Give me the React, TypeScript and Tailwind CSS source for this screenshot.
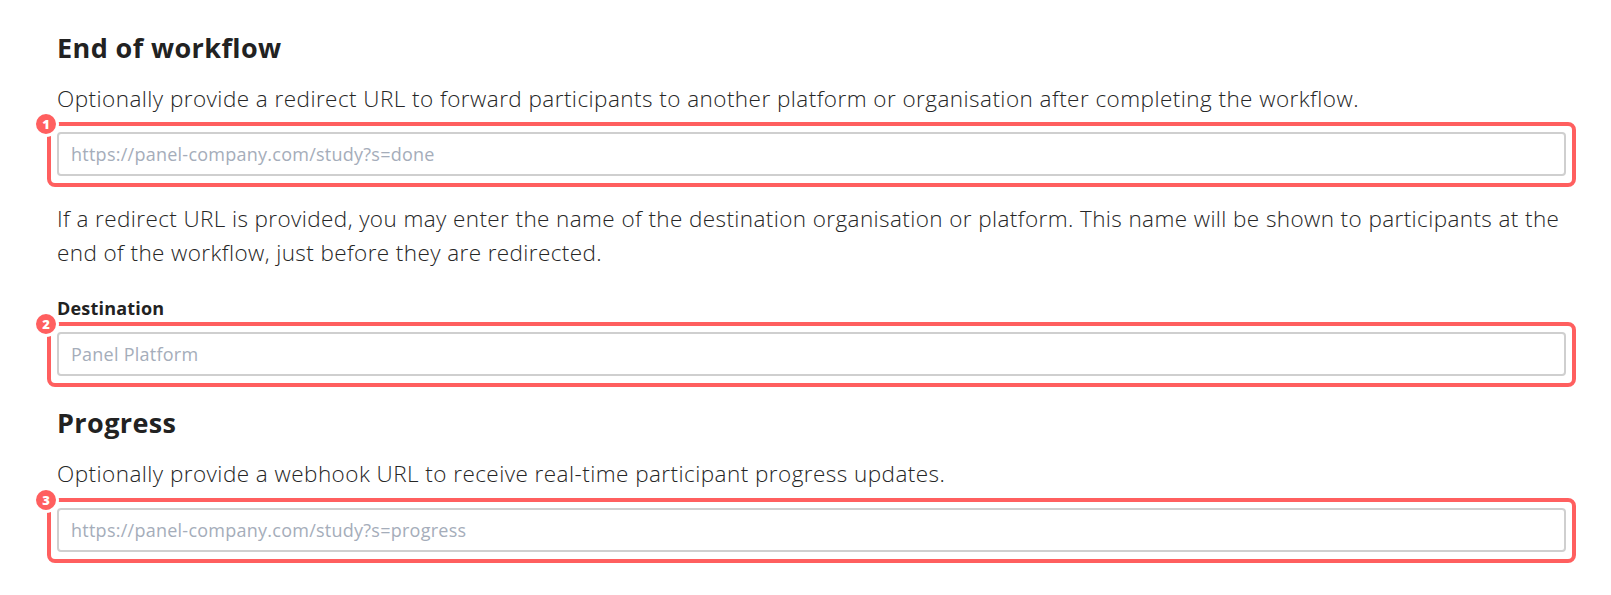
import React from "react";

function Badge({ n }: { n: number }) {
  return (
    <div className="absolute left-[-24px] top-[-21px] flex h-[26px] w-[26px] items-center justify-center rounded-full border-[3px] border-white bg-[#ff5f5f] text-[13px] font-extrabold leading-none text-white">
      {n}
    </div>
  );
}

function Field({ placeholder, n }: { placeholder: string; n: number }) {
  return (
    <div className="relative">
      <input
        className="block h-[44px] w-full rounded-[4px] border-2 border-[#cfcfcf] bg-white px-[12px] text-[18px] tracking-[0.25px] text-[#333] outline-none placeholder:text-[#a5adba]"
        placeholder={placeholder}
        readOnly
      />
      <div className="pointer-events-none absolute inset-x-[-10px] top-[-10px] bottom-[-11px] rounded-[8px] border-4 border-[#ff5f5f]" />
      <Badge n={n} />
    </div>
  );
}

export default function App() {
  return (
    <div
      className="min-h-[595px] bg-white pl-[57px] pr-[45px] pt-[32px] text-[#262626]"
      style={{ fontFamily: '"Open Sans", "Noto Sans", sans-serif' }}
    >
      <h2 className="mb-[18px] text-[27px] font-bold leading-[32px] tracking-[0.4px] text-[#222]">End of workflow</h2>
      <p className="mb-[16px] text-[22.5px] font-light leading-[34px] tracking-[0.45px]">
        Optionally provide a redirect URL to forward participants to another platform or organisation after completing the workflow.
      </p>
      <Field n={1} placeholder="https://panel-company.com/study?s=done" />
      <p className="mb-[28px] mt-[26px] whitespace-nowrap text-[22.5px] font-light leading-[34px] tracking-[0.4px]">
        If a redirect URL is provided, you may enter the name of the destination organisation or platform. This name will be shown to participants at the
        <br />
        end of the workflow, just before they are redirected.
      </p>
      <label className="mb-[14px] block text-[18px] font-bold leading-[20px] tracking-[0.2px] text-[#222]">Destination</label>
      <Field n={2} placeholder="Panel Platform" />
      <h2 className="mb-[18px] mt-[31px] text-[27px] font-bold leading-[32px] tracking-[0.4px] text-[#222]">Progress</h2>
      <p className="mb-[17px] text-[22.5px] font-light leading-[34px] tracking-[0.45px]">
        Optionally provide a webhook URL to receive real-time participant progress updates.
      </p>
      <Field n={3} placeholder="https://panel-company.com/study?s=progress" />
    </div>
  );
}
